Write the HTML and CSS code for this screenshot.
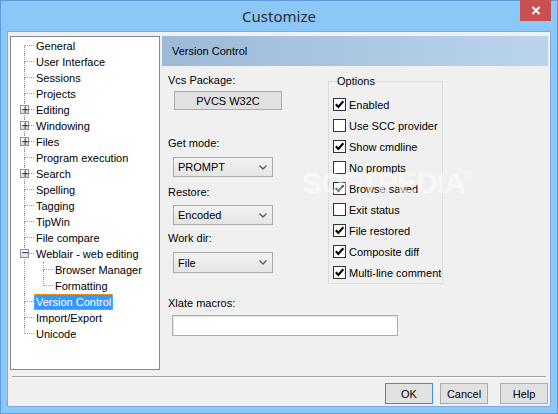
FILE: index.html
```html
<!DOCTYPE html>
<html>
<head>
<meta charset="utf-8">
<link rel="stylesheet" href="styles.css">
</head>
<body>
<div class="window">
  <div class="titlebar">
    <div></div>
    <div class="title">Customize</div>
    <div class="tb-right"><div class="close"><svg width="10" height="9" viewBox="0 0 10 9"><path d="M1.5 1 L8.5 8 M8.5 1 L1.5 8" stroke="#fff" stroke-width="2"/></svg></div></div>
  </div>
  <div class="client">
    <div class="main">
      <div class="tree">
        <div class="row"><span class="conn first"><span class="th"></span><span class="bh"></span></span><span class="lbl">General</span></div>
        <div class="row"><span class="conn"><span class="th"></span><span class="bh"></span></span><span class="lbl">User Interface</span></div>
        <div class="row"><span class="conn"><span class="th"></span><span class="bh"></span></span><span class="lbl">Sessions</span></div>
        <div class="row"><span class="conn"><span class="th"></span><span class="bh"></span></span><span class="lbl">Projects</span></div>
        <div class="row"><span class="conn"><span class="th"></span><span class="bh"></span><span class="box">+</span></span><span class="lbl">Editing</span></div>
        <div class="row"><span class="conn"><span class="th"></span><span class="bh"></span><span class="box">+</span></span><span class="lbl">Windowing</span></div>
        <div class="row"><span class="conn"><span class="th"></span><span class="bh"></span><span class="box">+</span></span><span class="lbl">Files</span></div>
        <div class="row"><span class="conn"><span class="th"></span><span class="bh"></span></span><span class="lbl">Program execution</span></div>
        <div class="row"><span class="conn"><span class="th"></span><span class="bh"></span><span class="box">+</span></span><span class="lbl">Search</span></div>
        <div class="row"><span class="conn"><span class="th"></span><span class="bh"></span></span><span class="lbl">Spelling</span></div>
        <div class="row"><span class="conn"><span class="th"></span><span class="bh"></span></span><span class="lbl">Tagging</span></div>
        <div class="row"><span class="conn"><span class="th"></span><span class="bh"></span></span><span class="lbl">TipWin</span></div>
        <div class="row"><span class="conn"><span class="th"></span><span class="bh"></span></span><span class="lbl">File compare</span></div>
        <div class="row"><span class="conn"><span class="th"></span><span class="bh"></span><span class="box minus">&minus;</span></span><span class="lbl">Weblair - web editing</span></div>
        <div class="row"><span class="pass"></span><span class="conn"><span class="th"></span><span class="bh"></span></span><span class="lbl">Browser Manager</span></div>
        <div class="row"><span class="pass"></span><span class="conn last"><span class="th"></span><span class="bh"></span></span><span class="lbl">Formatting</span></div>
        <div class="row"><span class="conn"><span class="th"></span><span class="bh"></span></span><span class="lbl sel">Version Control</span></div>
        <div class="row"><span class="conn"><span class="th"></span><span class="bh"></span></span><span class="lbl">Import/Export</span></div>
        <div class="row"><span class="conn last"><span class="th"></span><span class="bh"></span></span><span class="lbl">Unicode</span></div>
      </div>
      <div class="panel">
        <div class="header">Version Control</div>
        <div class="body">
          <div class="left">
            <div class="label l-vcs">Vcs Package:</div>
            <div class="btn pvcs">PVCS W32C</div>
            <div class="label l-get">Get mode:</div>
            <div class="combo c1"><span>PROMPT</span><svg width="8" height="5" viewBox="0 0 8 5"><path d="M0.5 0.5 L4 4 L7.5 0.5" fill="none" stroke="#606060" stroke-width="1.4"/></svg></div>
            <div class="label l-res">Restore:</div>
            <div class="combo c2"><span>Encoded</span><svg width="8" height="5" viewBox="0 0 8 5"><path d="M0.5 0.5 L4 4 L7.5 0.5" fill="none" stroke="#606060" stroke-width="1.4"/></svg></div>
            <div class="label l-work">Work dir:</div>
            <div class="combo c3"><span>File</span><svg width="8" height="5" viewBox="0 0 8 5"><path d="M0.5 0.5 L4 4 L7.5 0.5" fill="none" stroke="#606060" stroke-width="1.4"/></svg></div>
            <div class="label l-xlate">Xlate macros:</div>
            <div class="input"></div>
          </div>
          <div class="right">
            <div class="group">
              <div class="legend">Options</div>
              <div class="checks">
                <div class="chk"><span class="cb on"><svg width="11" height="11" viewBox="0 0 11 11"><path d="M1.8 5.3 L4.3 8 L9.3 2.3" fill="none" stroke="#000" stroke-width="2.1"/></svg></span>Enabled</div>
                <div class="chk"><span class="cb"></span>Use SCC provider</div>
                <div class="chk"><span class="cb on"><svg width="11" height="11" viewBox="0 0 11 11"><path d="M1.8 5.3 L4.3 8 L9.3 2.3" fill="none" stroke="#000" stroke-width="2.1"/></svg></span>Show cmdline</div>
                <div class="chk"><span class="cb"></span>No prompts</div>
                <div class="chk"><span class="cb on"><svg width="11" height="11" viewBox="0 0 11 11"><path d="M1.8 5.3 L4.3 8 L9.3 2.3" fill="none" stroke="#000" stroke-width="2.1"/></svg></span>Browse saved</div>
                <div class="chk"><span class="cb"></span>Exit status</div>
                <div class="chk"><span class="cb on"><svg width="11" height="11" viewBox="0 0 11 11"><path d="M1.8 5.3 L4.3 8 L9.3 2.3" fill="none" stroke="#000" stroke-width="2.1"/></svg></span>File restored</div>
                <div class="chk"><span class="cb on"><svg width="11" height="11" viewBox="0 0 11 11"><path d="M1.8 5.3 L4.3 8 L9.3 2.3" fill="none" stroke="#000" stroke-width="2.1"/></svg></span>Composite diff</div>
                <div class="chk"><span class="cb on"><svg width="11" height="11" viewBox="0 0 11 11"><path d="M1.8 5.3 L4.3 8 L9.3 2.3" fill="none" stroke="#000" stroke-width="2.1"/></svg></span>Multi-line comment</div>
              </div>
            </div>
          </div>
          <div class="watermark">SOFTPEDIA<sup>®</sup></div>
        </div>
      </div>
    </div>
    <div class="sep"></div>
    <div class="buttons">
      <div class="btn dlg ok">OK</div>
      <div class="btn dlg cancel">Cancel</div>
      <div class="btn dlg help">Help</div>
    </div>
  </div>
</div>
</body>
</html>
```
FILE: styles.css
```css
* { box-sizing: border-box; }
html, body { margin: 0; padding: 0; }
body {
  width: 558px; height: 414px; overflow: hidden;
  font-family: "Liberation Sans", Arial, sans-serif;
  font-size: 11px; color: #000;
}
.window {
  width: 558px; height: 414px;
  background: #8bc7f7;
  border: 1px solid #5d9cd8;
  display: flex; flex-direction: column;
}
.titlebar {
  height: 30px;
  display: grid;
  grid-template-columns: 1fr auto 1fr;
}
.title {
  font-family: "Noto Sans", "Open Sans", sans-serif;
  font-size: 15px; color: #2c2c2c;
  line-height: 30px;
  padding-top: 0;
}
.tb-right { display: flex; justify-content: flex-end; }
.close {
  width: 31px; height: 21px; margin-right: 6px; margin-top: -1px;
  background: #c75050;
  display: flex; align-items: center; justify-content: center;
}
.client {
  flex: 1;
  margin: 0 6px 6px 6px;
  border: 1px solid #79afe0;
  background: #f0f0f0;
  padding: 4px 2px 0 2px;
  display: flex; flex-direction: column;
}
.main { display: flex; height: 334px; gap: 2px; }
.tree {
  width: 150px; height: 334px;
  background: #fff;
  border: 1px solid #828790;
  padding-top: 1px;
}
.row { display: flex; height: 16px; padding-left: 13px; }
.conn {
  position: relative;
  width: 10px; height: 16px;
  display: flex; flex-direction: column;
}
.conn .th {
  height: 8px;
  border-left: 1px dotted #a0a0a0;
  border-bottom: 1px dotted #a0a0a0;
}
.conn .bh { height: 8px; border-left: 1px dotted #a0a0a0; }
.conn.first .th { border-left-color: transparent; }
.conn.last .bh { border-left-color: transparent; }
.pass { width: 19px; height: 16px; border-left: 1px dotted #a0a0a0; }
.box {
  position: absolute; left: -4px; top: 3px;
  width: 9px; height: 9px;
  border: 1px solid #919191;
  background: linear-gradient(#fff, #dedede);
  color: #2d4c8f; font-size: 10px; font-weight: bold; line-height: 7px;
  text-align: center;
  font-family: "DejaVu Sans", sans-serif;
}
.box.minus { line-height: 6px; }
.lbl {
  display: block; height: 16px; line-height: 16px;
  padding: 0 2px; white-space: nowrap;
}
.lbl.sel {
  background: #3399ff; color: #fff;
  outline: 1px dotted #f5a030; outline-offset: -1px;
}
.panel { flex: 1; display: flex; flex-direction: column; }
.header {
  height: 30px; line-height: 30px;
  padding-left: 10px;
  background: linear-gradient(to right, #9cb9d7, #bad4ed);
  color: #000;
}
.body { position: relative; display: flex; flex: 1; }
.left { width: 166px; padding-left: 6px; display: flex; flex-direction: column; align-items: flex-start; }
.label { line-height: 13px; height: 13px; }
.l-vcs { margin-top: 8px; }
.l-get { margin-top: 27px; }
.l-res { margin-top: 9px; }
.l-work { margin-top: 7px; }
.l-xlate { margin-top: 24px; }
.btn {
  background: #e1e1e1;
  border: 1px solid #adadad;
  display: flex; align-items: center; justify-content: center;
}
.pvcs { margin-top: 4px; margin-left: 6px; width: 108px; height: 19px; }
.combo {
  margin-left: 5px;
  width: 100px; height: 20px;
  border: 1px solid #acacac;
  background: linear-gradient(#f2f2f2, #e5e5e5);
  display: flex; align-items: center; justify-content: space-between;
  padding: 0 5px 0 4px;
}
.c1 { margin-top: 7px; }
.c2 { margin-top: 6px; }
.c3 { margin-top: 7px; height: 21px; }
.input {
  margin-top: 5px; margin-left: 4px;
  width: 226px; height: 21px;
  background: #fff;
  border: 1px solid #abadb3;
  box-shadow: inset 1px 1px 0 #e3e3e3;
}
.right { padding-top: 15px; }
.group {
  width: 115px; height: 203px;
  border: 1px solid #dcdcdc;
}
.legend {
  margin-top: -7px; margin-left: 7px;
  width: max-content;
  padding: 0 1px;
  background: #f0f0f0;
  line-height: 13px;
}
.checks { margin-top: 6px; }
.chk {
  height: 21px; display: flex; align-items: center;
  padding-left: 4px; gap: 3px; white-space: nowrap;
}
.cb {
  width: 13px; height: 13px;
  border: 1px solid #333;
  background: #fff;
  display: flex;
}
.watermark {
  position: absolute; left: 140px; top: 100px;
  font-family: "Liberation Sans", Arial, sans-serif;
  font-weight: bold; font-size: 30px; letter-spacing: -1px;
  color: rgba(255,255,255,0.55);
  pointer-events: none;
}
.watermark sup { font-size: 11px; font-weight: normal; vertical-align: 14px; }
.sep {
  margin: 6px 2px 0 2px;
  height: 2px;
  border-top: 1px solid #a0a0a0;
  border-bottom: 1px solid #fff;
}
.buttons {
  display: flex; justify-content: flex-end;
  margin-top: 5px;
}
.dlg { width: 48px; height: 21px; }
.ok { border-color: #3c8fe0; }
.cancel { margin-left: 7px; }
.help { margin-left: 12px; }
```
